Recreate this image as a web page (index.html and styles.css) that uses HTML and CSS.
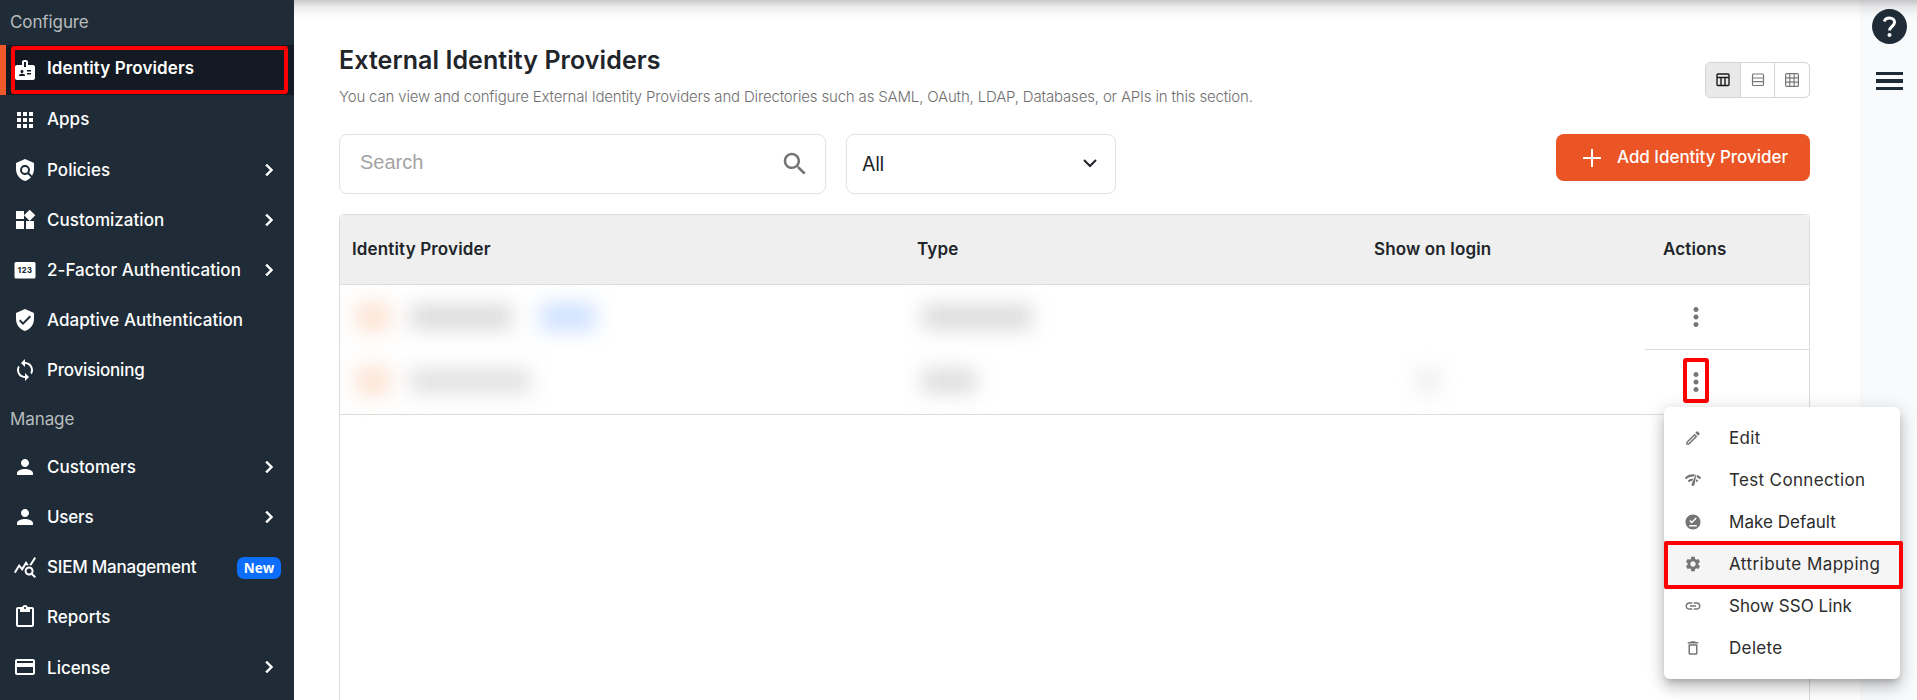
FILE: index.html
```html
<!DOCTYPE html>
<html lang="en">
<head>
	<meta charset="UTF-8">
	<title>External Identity Providers</title>
	<link rel="stylesheet" href="styles.css">
</head>
<body>
	<!-- sidebar -->
	<nav class="sidebar">
		<div class="nav-title">Configure</div>
		<a class="nav-item active">
			<svg class="icon" viewBox="0 0 24 24"><path d="M20 7h-5V4c0-1.1-.9-2-2-2h-2c-1.1 0-2 .9-2 2v3H4c-1.1 0-2 .9-2 2v11c0 1.1.9 2 2 2h16c1.1 0 2-.9 2-2V9c0-1.1-.9-2-2-2zM9 12c.83 0 1.5.67 1.5 1.5S9.83 15 9 15s-1.5-.67-1.5-1.5S8.17 12 9 12zm3 6H6v-.75c0-1 2-1.5 3-1.5s3 .5 3 1.5V18zm1-9h-2V4h2v5zm5 7.5h-4V15h4v1.5zm0-3h-4V12h4v1.5z"/></svg>
			<span class="label">Identity Providers</span>
			<i class="mark mark-nav"></i>
		</a>
		<a class="nav-item">
			<svg class="icon" viewBox="0 0 24 24"><path d="M4 8h4V4H4v4zm6 12h4v-4h-4v4zm-6 0h4v-4H4v4zm0-6h4v-4H4v4zm6 0h4v-4h-4v4zm6-10v4h4V4h-4zm-6 4h4V4h-4v4zm6 6h4v-4h-4v4zm0 6h4v-4h-4v4z"/></svg>
			<span class="label high">Apps</span>
		</a>
		<a class="nav-item">
			<svg class="icon" viewBox="0 0 24 24"><path d="M21 5l-9-4-9 4v6c0 5.55 3.84 10.74 9 12 2.3-.56 4.33-1.9 5.88-3.71l-3.12-3.12c-1.94 1.29-4.58 1.07-6.29-.64-1.95-1.95-1.95-5.12 0-7.07 1.95-1.95 5.12-1.95 7.07 0 1.71 1.71 1.92 4.35.64 6.29l2.9 2.9C20.29 15.69 21 13.38 21 11V5z"/><circle cx="12" cy="12" r="3"/></svg>
			<span class="label">Policies</span>
			<svg class="arrow" viewBox="0 0 24 24"><path d="M10 6L8.59 7.41 13.17 12l-4.58 4.59L10 18l6-6z"/></svg>
		</a>
		<a class="nav-item">
			<svg class="icon" viewBox="0 0 24 24"><path d="M13 13v8h8v-8h-8zM3 21h8v-8H3v8zM3 3v8h8V3H3zm13.66-1.31L11 7.34 16.66 13l5.66-5.66-5.66-5.65z"/></svg>
			<span class="label">Customization</span>
			<svg class="arrow" viewBox="0 0 24 24"><path d="M10 6L8.59 7.41 13.17 12l-4.58 4.59L10 18l6-6z"/></svg>
		</a>
		<a class="nav-item">
			<svg class="icon" viewBox="0 0 24 24"><rect x="1.500" y="4" width="21" height="16.500" rx="1.500"/><text class="digits" x="12.200" y="15" text-anchor="middle">123</text></svg>
			<span class="label">2-Factor Authentication</span>
			<svg class="arrow" viewBox="0 0 24 24"><path d="M10 6L8.59 7.41 13.17 12l-4.58 4.59L10 18l6-6z"/></svg>
		</a>
		<a class="nav-item">
			<svg class="icon" viewBox="0 0 24 24"><path d="M12 1L3 5v6c0 5.55 3.84 10.74 9 12 5.16-1.26 9-6.45 9-12V5l-9-4zm-2 16l-4-4 1.41-1.41L10 14.17l6.59-6.59L18 9l-8 8z"/></svg>
			<span class="label">Adaptive Authentication</span>
		</a>
		<a class="nav-item">
			<svg class="icon" viewBox="0 0 24 24"><path d="M12 4V1L8 5l4 4V6c3.31 0 6 2.69 6 6 0 1.01-.25 1.97-.7 2.8l1.46 1.46C19.54 15.03 20 13.57 20 12c0-4.42-3.58-8-8-8zm0 14c-3.31 0-6-2.69-6-6 0-1.01.25-1.97.7-2.8L5.24 7.74C4.46 8.97 4 10.43 4 12c0 4.42 3.58 8 8 8v3l4-4-4-4v3z"/></svg>
			<span class="label tight">Provisioning</span>
		</a>
		<div class="nav-title second">Manage</div>
		<a class="nav-item">
			<svg class="icon" viewBox="0 0 24 24"><path d="M12 12c2.21 0 4-1.79 4-4s-1.79-4-4-4-4 1.79-4 4 1.79 4 4 4zm0 2c-2.67 0-8 1.34-8 4v2h16v-2c0-2.66-5.33-4-8-4z"/></svg>
			<span class="label">Customers</span>
			<svg class="arrow" viewBox="0 0 24 24"><path d="M10 6L8.59 7.41 13.17 12l-4.58 4.59L10 18l6-6z"/></svg>
		</a>
		<a class="nav-item">
			<svg class="icon" viewBox="0 0 24 24"><path d="M12 12c2.21 0 4-1.79 4-4s-1.79-4-4-4-4 1.79-4 4 1.79 4 4 4zm0 2c-2.67 0-8 1.34-8 4v2h16v-2c0-2.66-5.33-4-8-4z"/></svg>
			<span class="label tight">Users</span>
			<svg class="arrow" viewBox="0 0 24 24"><path d="M10 6L8.59 7.41 13.17 12l-4.58 4.59L10 18l6-6z"/></svg>
		</a>
		<a class="nav-item">
			<svg class="icon" viewBox="0 0 24 24"><path d="M19.88 18.47c.44-.7.7-1.51.7-2.39 0-2.49-2.01-4.5-4.5-4.5s-4.5 2.01-4.5 4.5 2.01 4.5 4.49 4.5c.88 0 1.7-.26 2.39-.7L21.58 23 23 21.58l-3.12-3.11zm-3.8.11c-1.38 0-2.5-1.12-2.5-2.5s1.12-2.5 2.5-2.5 2.5 1.12 2.5 2.5-1.12 2.5-2.5 2.5zm-.36-8.5c-.74.02-1.45.18-2.1.45l-.55-.83-3.8 6.18-3.01-3.52-3.63 5.81L1 17l5-8 3 3.5L13 6l2.72 4.08zm2.59.5c-.64-.28-1.33-.45-2.05-.49L21.38 2 23 3.18l-4.69 7.4z"/></svg>
			<span class="label tight">SIEM Management</span>
			<span class="badge">New</span>
		</a>
		<a class="nav-item">
			<svg class="icon" viewBox="0 0 24 24"><path d="M19 2h-4.18C14.4.84 13.3 0 12 0c-1.3 0-2.4.84-2.82 2H5c-1.1 0-2 .9-2 2v16c0 1.1.9 2 2 2h14c1.1 0 2-.9 2-2V4c0-1.1-.9-2-2-2zm-7 0c.55 0 1 .45 1 1s-.45 1-1 1-1-.45-1-1 .45-1 1-1zm7 18H5V4h2v3h10V4h2v16z"/></svg>
			<span class="label">Reports</span>
		</a>
		<a class="nav-item">
			<svg class="icon" viewBox="0 0 24 24"><path d="M20 4H4c-1.11 0-1.99.89-1.99 2L2 18c0 1.11.89 2 2 2h16c1.11 0 2-.89 2-2V6c0-1.11-.89-2-2-2zm0 14H4v-6h16v6zm0-10H4V6h16v2z"/></svg>
			<span class="label low">License</span>
			<svg class="arrow" viewBox="0 0 24 24"><path d="M10 6L8.59 7.41 13.17 12l-4.58 4.59L10 18l6-6z"/></svg>
		</a>
	</nav>

	<main class="main">
		<div class="head">
			<div>
				<h1>External Identity Providers</h1>
				<p class="desc">You can view and configure External Identity Providers and Directories such as SAML, OAuth, LDAP, Databases, or APIs in this section.</p>
			</div>
			<div class="views">
				<span class="view on"><svg width="14" height="14" viewBox="0 0 14 14"><path d="M2 1h10a1 1 0 0 1 1 1v9.500a1 1 0 0 1-1 1H2a1 1 0 0 1-1-1V2a1 1 0 0 1 1-1zM1 4.500h12M5 4.500v8M9 4.500v8"/></svg></span>
				<span class="view"><svg width="14" height="14" viewBox="0 0 14 14"><path d="M2.500 1h9a1 1 0 0 1 1 1v9.500a1 1 0 0 1-1 1h-9a1 1 0 0 1-1-1V2a1 1 0 0 1 1-1zM1.500 5h11M1.500 8.600h11"/></svg></span>
				<span class="view"><svg width="14" height="14" viewBox="0 0 14 14"><path d="M1.600.6h10.800a1 1 0 0 1 1 1v10.800a1 1 0 0 1-1 1H1.600a1 1 0 0 1-1-1V1.600a1 1 0 0 1 1-1zM.6 4.800h12.800M.6 9.100h12.800M4.800.6v12.800M9.100.6v12.800"/></svg></span>
			</div>
		</div>

		<div class="tools">
			<div class="search">
				<span>Search</span>
				<svg width="30" height="30" viewBox="0 0 24 24"><path d="M15.5 14h-.79l-.28-.27C15.41 12.59 16 11.11 16 9.500 16 5.910 13.090 3 9.500 3S3 5.910 3 9.500 5.910 16 9.500 16c1.610 0 3.090-.59 4.230-1.570l.27.28v.79l5 4.990L20.490 19l-4.990-5zm-6 0C7.010 14 5 11.990 5 9.500S7.010 5 9.500 5 14 7.010 14 9.500 11.990 14 9.500 14z"/></svg>
			</div>
			<div class="select">
				<span>All</span>
				<svg width="16" height="10" viewBox="0 0 16 10"><path d="M2 2l6 6 6-6"/></svg>
			</div>
			<div class="add">
				<svg width="18" height="18" viewBox="0 0 18 18"><path d="M9 0v18M0 9h18"/></svg>
				<span>Add Identity Provider</span>
			</div>
		</div>

		<div class="table">
			<div class="row thead">
				<span>Identity Provider</span>
				<span>Type</span>
				<span>Show on login</span>
				<span>Actions</span>
			</div>
			<div class="row">
				<div class="cell"><i class="blur logo"></i><i class="blur name"></i><i class="blur tag"></i></div>
				<div class="cell"><i class="blur type"></i></div>
				<div class="cell"></div>
				<div class="cell action">
					<svg class="dots" viewBox="0 0 24 24"><path d="M12 8c1.1 0 2-.9 2-2s-.9-2-2-2-2 .9-2 2 .9 2 2 2zm0 2c-1.1 0-2 .9-2 2s.9 2 2 2 2-.9 2-2-.9-2-2-2zm0 6c-1.1 0-2 .9-2 2s.9 2 2 2 2-.9 2-2-.9-2-2-2z"/></svg>
				</div>
			</div>
			<div class="row last">
				<div class="cell"><i class="blur logo"></i><i class="blur name long"></i></div>
				<div class="cell"><i class="blur type short"></i></div>
				<div class="cell"><i class="blur login"></i></div>
				<div class="cell action">
					<svg class="dots" viewBox="0 0 24 24"><path d="M12 8c1.1 0 2-.9 2-2s-.9-2-2-2-2 .9-2 2 .9 2 2 2zm0 2c-1.1 0-2 .9-2 2s.9 2 2 2 2-.9 2-2-.9-2-2-2zm0 6c-1.1 0-2 .9-2 2s.9 2 2 2 2-.9 2-2-.9-2-2-2z"/></svg>
					<i class="mark mark-dots"></i>
					<!-- actions menu -->
					<div class="menu">
						<div class="menu-item">
							<svg viewBox="0 0 24 24"><path d="M14.060 9.020l.92.92L5.920 19H5v-.92l9.060-9.060M17.660 3c-.25 0-.51.1-.7.290l-1.830 1.830 3.750 3.750 1.830-1.830c.39-.39.39-1.020 0-1.410l-2.340-2.340c-.2-.2-.45-.29-.71-.29zm-3.600 3.190L3 17.250V21h3.750L17.810 9.940l-3.750-3.750z"/></svg>
							<span>Edit</span>
						</div>
						<div class="menu-item">
							<svg viewBox="0 0 24 24"><path d="M15.9 5c-.17 0-.32.09-.41.23l-.07.15-5.18 11.65c-.16.29-.26.61-.26.96 0 1.110.9 2.010 2.010 2.010.96 0 1.770-.68 1.960-1.590l.01-.03L16.400 5.500c0-.28-.22-.5-.5-.5zM1 9l2 2c2.880-2.880 6.790-4.080 10.530-3.620l1.190-2.680C9.890 3.840 4.740 5.270 1 9zm20 2l2-2c-1.640-1.640-3.550-2.820-5.590-3.570l-.53 2.820c1.500.62 2.900 1.530 4.120 2.750zm-4 4l2-2c-.8-.8-1.700-1.420-2.660-1.890l-.55 2.920c.42.27.83.59 1.210.97zM5 13l2 2c1.130-1.130 2.560-1.790 4.030-2l1.280-2.880c-2.630-.08-5.300.87-7.310 2.880z"/></svg>
							<span>Test Connection</span>
						</div>
						<div class="menu-item snug">
							<svg viewBox="0 0 24 24"><path d="M12 2C6.500 2 2 6.500 2 12s4.500 10 10 10 10-4.500 10-10S17.500 2 12 2zm5 16H7v-2h10v2zm-6.700-4L7 10.700l1.400-1.400 1.900 1.900 5.300-5.300L17 7.300 10.300 14z"/></svg>
							<span>Make Default</span>
						</div>
						<div class="menu-item hover">
							<svg viewBox="0 0 24 24"><path d="M19.140 12.940c.04-.3.060-.61.060-.94 0-.32-.02-.64-.07-.94l2.030-1.580c.18-.14.23-.41.12-.61l-1.920-3.320c-.12-.22-.37-.29-.59-.22l-2.390.96c-.5-.38-1.030-.7-1.620-.94l-.36-2.540c-.04-.24-.24-.41-.48-.41h-3.840c-.24 0-.43.17-.47.41l-.36 2.540c-.59.24-1.130.57-1.620.94l-2.390-.96c-.22-.08-.47 0-.59.22L2.740 8.870c-.12.21-.08.47.12.61l2.030 1.580c-.05.3-.09.63-.09.94s.02.64.07.94l-2.030 1.580c-.18.14-.23.41-.12.61l1.920 3.320c.12.22.37.29.59.22l2.390-.96c.5.38 1.030.7 1.620.94l.36 2.540c.05.24.24.41.48.41h3.840c.24 0 .44-.17.47-.41l.36-2.540c.59-.24 1.130-.56 1.620-.94l2.390.96c.22.08.47 0 .59-.22l1.920-3.320c.12-.22.07-.47-.12-.61l-2.010-1.580zM12 15.600c-1.980 0-3.600-1.620-3.600-3.600s1.620-3.600 3.600-3.600 3.600 1.620 3.600 3.600-1.620 3.600-3.600 3.600z"/></svg>
							<span>Attribute Mapping</span>
							<i class="mark mark-menu"></i>
						</div>
						<div class="menu-item snug">
							<svg viewBox="0 0 24 24"><path d="M3.900 12c0-1.710 1.390-3.100 3.100-3.100h4V7H7c-2.760 0-5 2.240-5 5s2.240 5 5 5h4v-1.900H7c-1.710 0-3.100-1.390-3.100-3.100zM8 13h8v-2H8v2zm9-6h-4v1.900h4c1.710 0 3.100 1.390 3.100 3.100s-1.390 3.100-3.100 3.100h-4V17h4c2.760 0 5-2.240 5-5s-2.240-5-5-5z"/></svg>
							<span>Show SSO Link</span>
						</div>
						<div class="menu-item">
							<svg viewBox="0 0 24 24"><path d="M6 19c0 1.100.9 2 2 2h8c1.100 0 2-.9 2-2V7H6v12zM8 9h8v10H8V9zm7.500-5l-1-1h-5l-1 1H5v2h14V4z"/></svg>
							<span>Delete</span>
						</div>
					</div>
				</div>
			</div>
		</div>
	</main>

	<aside class="rail">
		<svg width="35" height="35" viewBox="2 2 20 20"><path d="M12 2C6.480 2 2 6.480 2 12s4.480 10 10 10 10-4.480 10-10S17.520 2 12 2z"/><path class="ask" d="M9.100 9.200C9.300 7.900 10.500 7.100 12 7.100c1.700 0 2.900 1 2.900 2.500 0 2.200-2.900 2.400-2.900 4.700"/><circle class="ask-dot" cx="12" cy="16.800" r="1.150"/></svg>
		<div class="burger"><i></i><i></i><i></i></div>
	</aside>
	<div class="topshade"></div>
</body>
</html>
```
FILE: styles.css
```css
*{
	margin: 0;
	padding: 0;
	box-sizing: border-box;
}
body{
	display: flex;
	height: 700px;
	overflow: hidden;
	background: #fff;
	font-family: Inter, "Open Sans", sans-serif;
	color: #212529;
	position: relative;
}
svg{
	display: block;
	flex: none;
}

/* sidebar */
.sidebar{
	width: 294px;
	flex: none;
	background: #1f2c37;
	color: #fff;
}
.nav-title{
	height: 45px;
	padding-left: 10px;
	line-height: 45px;
	font-size: 17px;
	letter-spacing: -0.1px;
	color: #b9bcbd;
}
.nav-title.second{
	height: 47px;
	line-height: 49px;
}
.nav-item{
	display: flex;
	align-items: center;
	height: 50px;
	padding: 0 13px 0 7px;
	border-left: 6px solid transparent;
	position: relative;
}
.nav-item.active{
	border-color: #f0592a;
	background: #131a23;
}
.icon{
	width: 24px;
	height: 24px;
	fill: #fff;
}
.digits{
	font-size: 7.5px;
	font-weight: 800;
	letter-spacing: 0.6px;
	fill: #1f2c37;
}
.label{
	flex: 1;
	margin-left: 10px;
	margin-top: -1px;
	font-size: 17px;
	font-weight: 500;
	letter-spacing: 0.03px;
	line-height: 24px;
	white-space: nowrap;
}
.label.tight{
	letter-spacing: -0.22px;
}
.label.high{
	margin-top: -3px;
}
.label.low{
	margin-top: 2px;
}
.active .label{
	margin-top: -4px;
	font-weight: 600;
	letter-spacing: 0.1px;
}
.arrow{
	width: 24px;
	height: 24px;
	fill: #fff;
	stroke: #fff;
	stroke-width: .5;
}
.badge{
	width: 44px;
	height: 22px;
	margin-top: 2px;
	border-radius: 7px;
	background: #0d6efd;
	font: bold 13.5px/22px "Open Sans", sans-serif;
	text-align: center;
}

/* red highlight frames */
.mark{
	position: absolute;
	border: 4px solid #f00;
	border-radius: 3px;
}
.mark-nav{
	left: 5px;
	top: 1px;
	width: 277px;
	height: 48px;
}
.mark-dots{
	left: 38px;
	top: 8px;
	width: 26px;
	height: 45px;
}
.mark-menu{
	left: 0;
	top: -2px;
	width: 239px;
	height: 48px;
	border-radius: 2px;
}

/* content */
.main{
	flex: 1;
	display: flex;
	flex-direction: column;
	padding: 43px 50px 0 45px;
}
.head{
	display: flex;
	justify-content: space-between;
	height: 91px;
}
h1{
	font-size: 25px;
	line-height: 35px;
	font-weight: 600;
	letter-spacing: 0.07px;
}
.desc{
	margin-top: 8px;
	font-size: 15px;
	line-height: 22px;
	font-weight: 300;
	letter-spacing: -0.17px;
	color: #6f6f6f;
	white-space: nowrap;
}
.views{
	display: flex;
	width: 105px;
	height: 36px;
	margin-top: 19px;
	border: 1px solid #d4d4d4;
	border-radius: 5px;
	overflow: hidden;
}
.view{
	flex: 1;
	display: flex;
	align-items: center;
	justify-content: center;
	border-left: 1px solid #d4d4d4;
}
.view:first-child{
	border-left: none;
}
.view svg{
	fill: none;
	stroke: #777;
	stroke-width: 1.2;
}
.view.on{
	background: #e9e9e9;
}
.view.on svg{
	stroke: #1b1b1b;
	stroke-width: 1.4;
}
.tools{
	display: flex;
	align-items: flex-start;
	height: 80px;
}
.search,
.select{
	display: flex;
	align-items: center;
	justify-content: space-between;
	height: 60px;
	border: 1px solid #dfe2e2;
	border-radius: 8px;
}
.search{
	width: 487px;
	padding: 0 15px 0 20px;
	font: 20px "Liberation Sans", Arial, sans-serif;
	color: #a3a3a3;
}
.search span{
	margin-top: -4px;
}
.search svg{
	fill: #737373;
}
.select{
	width: 270px;
	margin-left: 20px;
	padding: 0 17px 0 15px;
	font-size: 19.5px;
	letter-spacing: -0.3px;
}
.select svg{
	fill: none;
	stroke: #212529;
	stroke-width: 2;
	margin-top: -2px;
}
.add{
	display: flex;
	align-items: center;
	width: 254px;
	height: 47px;
	margin-left: auto;
	padding-left: 27px;
	border-radius: 8px;
	background: #eb5424;
	color: #fff;
	font-size: 17px;
	font-weight: 500;
	letter-spacing: -0.03px;
	white-space: nowrap;
}
.add svg{
	stroke: #fff;
	stroke-width: 2;
	margin-right: 16px;
}
.add span{
	margin-top: -1px;
}

/* table */
.table{
	flex: 1;
	border: 1px solid #dcdcdc;
	border-bottom: none;
	border-radius: 5px 5px 0 0;
}
.row{
	display: grid;
	grid-template-columns: 566px 457px 282px 164px;
	height: 65px;
}
.thead{
	height: 70px;
	padding: 0 0 2px 12px;
	grid-template-columns: 565px 457px 289px auto;
	align-items: center;
	background: #efefef;
	border-bottom: 1px solid #dcdcdc;
	border-radius: 5px 5px 0 0;
	font-size: 17px;
	font-weight: 600;
	letter-spacing: 0.15px;
}
.row.last{
	border-bottom: 1px solid #dcdcdc;
}
.cell{
	display: flex;
	align-items: center;
	padding-left: 16px;
}
.cell.action{
	padding-left: 36px;
	position: relative;
}
.row:not(.last) .action{
	border-bottom: 1px solid #dcdcdc;
}
.dots{
	width: 30px;
	height: 30px;
	fill: #757575;
}
.blur{
	height: 24px;
	margin-top: -2px;
	filter: blur(10px);
	background: #dadada;
}
.logo{
	width: 34px;
	height: 30px;
	background: #fde3d3;
}
.name{
	width: 102px;
	margin-left: 20px;
}
.name.long{
	width: 120px;
	background: #e0e0e0;
}
.tag{
	width: 56px;
	height: 28px;
	margin-left: 28px;
	background: #cfe1ff;
}
.type{
	width: 110px;
}
.type.short{
	width: 54px;
	background: #dcdcdc;
}
.login{
	width: 26px;
	margin-left: 36px;
	background: #efefef;
}

/* dropdown over the table */
.menu{
	position: absolute;
	left: 19px;
	top: 57px;
	width: 236px;
	height: 272px;
	padding: 10px 0;
	border-radius: 6px;
	background: #fff;
	box-shadow: 0 5px 6px -3px rgba(0,0,0,.2), 0 9px 14px 1px rgba(0,0,0,.14), 0 3px 18px 2px rgba(0,0,0,.12);
	z-index: 2;
}
.menu-item{
	display: flex;
	align-items: center;
	height: 42px;
	padding-left: 20px;
	font-size: 17px;
	letter-spacing: 0.35px;
	color: #2b2b2b;
	position: relative;
	white-space: nowrap;
}
.menu-item.snug{
	letter-spacing: 0.05px;
}
.menu-item.hover{
	background: #f5f5f5;
	letter-spacing: 0.45px;
}
.menu-item svg{
	width: 18px;
	height: 18px;
	fill: #757575;
	margin-right: 27px;
}

/* right rail */
.rail{
	width: 57px;
	flex: none;
	padding: 9px 0 0 12px;
	background: #f9fafc;
}
.rail svg{
	fill: #1f2c37;
}
.rail .ask{
	fill: none;
	stroke: #fff;
	stroke-width: 1.7;
}
.rail .ask-dot{
	fill: #fff;
}
.burger{
	display: flex;
	flex-direction: column;
	gap: 4px;
	width: 27px;
	margin: 28px 0 0 4px;
}
.burger i{
	height: 3.3px;
	background: #1f2c37;
}
.topshade{
	position: absolute;
	left: 294px;
	right: 0;
	top: 0;
	height: 20px;
	background: linear-gradient(rgba(0,0,0,.21), rgba(0,0,0,.08) 35%, rgba(0,0,0,.02) 75%, rgba(0,0,0,0));
}
```
